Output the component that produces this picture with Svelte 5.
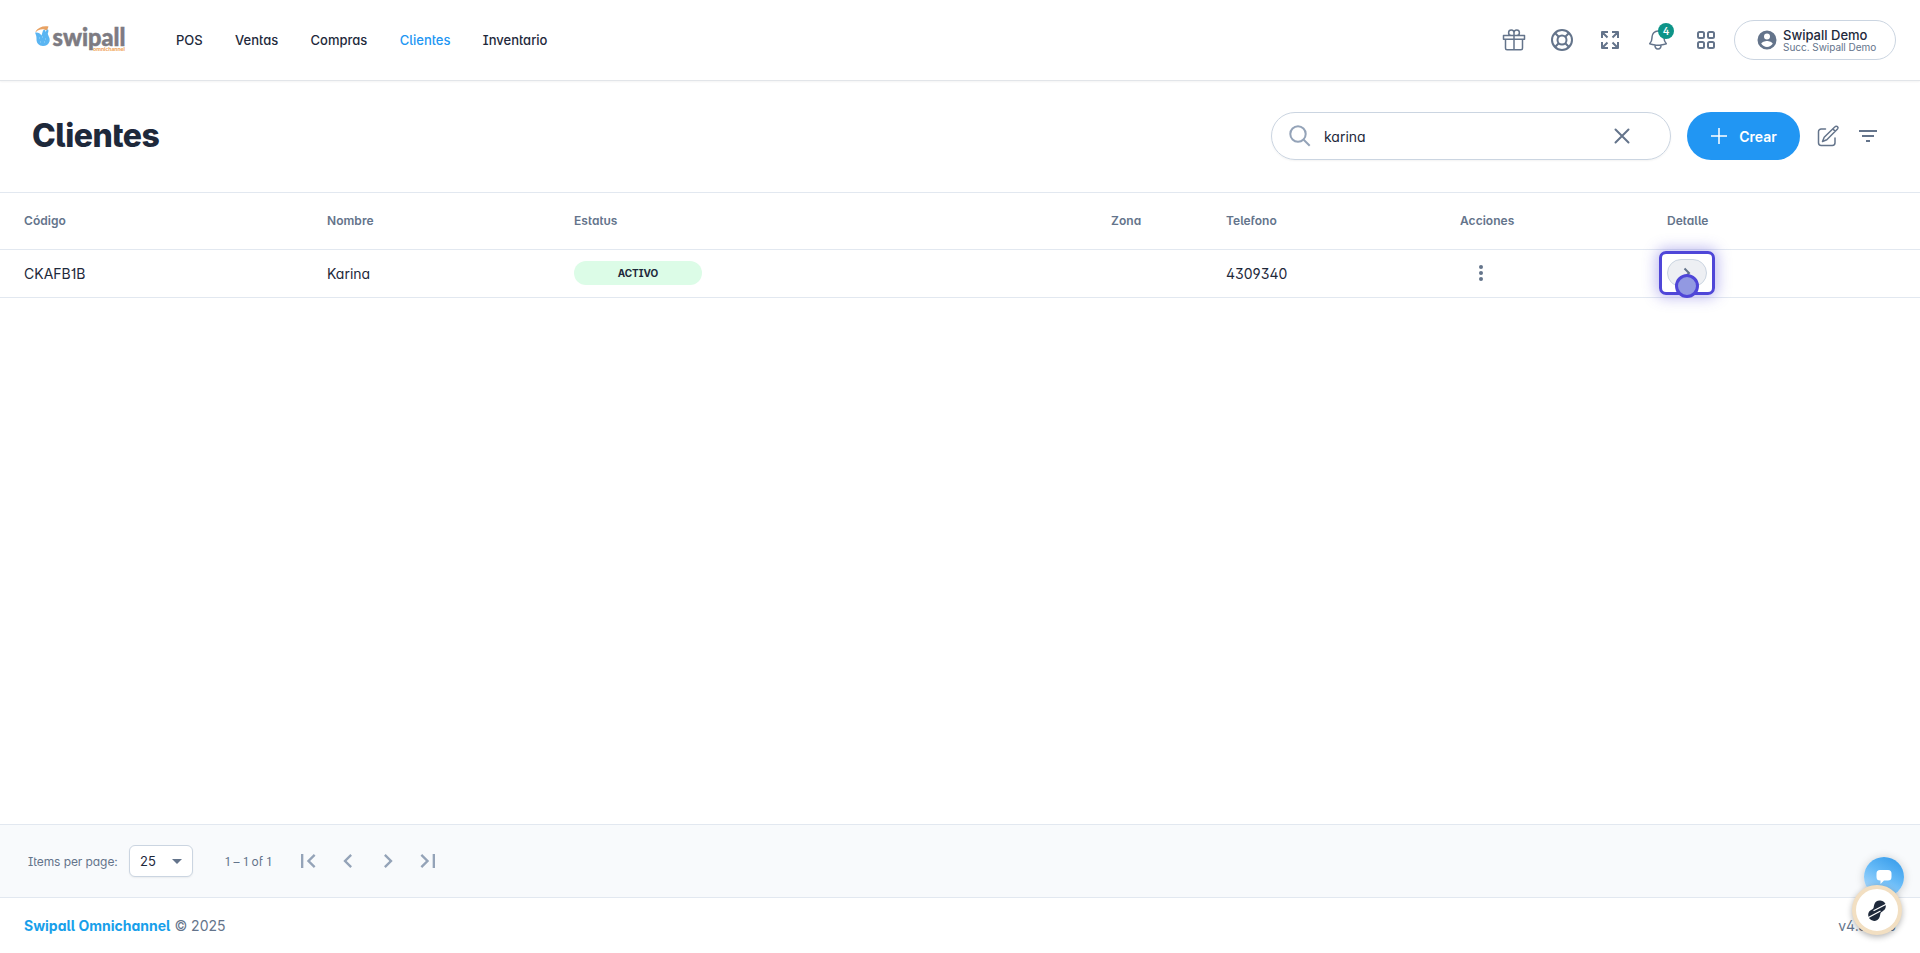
<script>
  let search = 'karina'

  const nav = ['POS', 'Ventas', 'Compras', 'Clientes', 'Inventario']
  const current = 'Clientes'

  const columns = ['Código', 'Nombre', 'Estatus', 'Zona', 'Telefono', 'Acciones', 'Detalle']

  const clients = [
    { code: 'CKAFB1B', name: 'Karina', status: 'ACTIVO', zone: '', phone: '4309340' }
  ]

  const pageButtons = [
    { label: 'First page', d: 'M18.41 16.59L13.82 12l4.59-4.59L17 6l-6 6 6 6zM6 6h2v12H6z' },
    { label: 'Previous page', d: 'M15.41 7.41L14 6l-6 6 6 6 1.41-1.41L10.83 12z' },
    { label: 'Next page', d: 'M10 6L8.59 7.41 13.17 12l-4.58 4.59L10 18l6-6z' },
    { label: 'Last page', d: 'M5.59 7.41L10.18 12l-4.59 4.59L7 18l6-6-6-6zM16 6h2v12h-2z' }
  ]
</script>

<div class="page">
  <header class="topbar">
    <svg class="logo" viewBox="0 -4 94 36" width="94" height="36">
      <path d="M1.500 7.500 C4 3.500 9 1.500 14.500 2.500 L13 6.500 L10 5.500 C7 5 4 6 2 8z" fill="#e8a263" />
      <path d="M1 8.500 C4 8 6 9 7.500 11.500 L9 6.500 C10.500 5 11.500 6 11.500 8 L13 5.500 C14.800 5 14.800 7 13.800 9.500 C14 12 16.500 14 15.500 17.500 C14.500 20.500 12 22 9 22 C5 22 2.300 19 2.500 15 C2.500 13 2.500 12 1 8.500z" fill="#5ab5f2" />
      <path d="M5 14h1M8 13h1M11 15h1M6 18h1M10 18h1" stroke="#9ad6f7" />
      <text class="brand" x="18.500" y="22" textLength="73" lengthAdjust="spacingAndGlyphs">swipall</text>
      <text class="tagline" x="59" y="27" textLength="32" lengthAdjust="spacingAndGlyphs">omnichannel</text>
    </svg>

    <nav>
      {#each nav as item}
        <a href="#top" class:active={item === current}>{item}</a>
      {/each}
    </nav>

    <div class="tools">
      <button class="tool" aria-label="Novedades">
        <svg viewBox="0 0 24 24" class="line"><path d="M12 7.500v14M1.500 7.500h21v3.700h-21zM3.500 11.200v9a1.500 1.500 0 0 0 1.500 1.500h14a1.500 1.500 0 0 0 1.500-1.500v-9M12 7.500H9.200A2.700 2.700 0 1 1 12 4.800zM12 7.500h2.800A2.700 2.700 0 1 0 12 4.800z" /></svg>
      </button>
      <button class="tool" aria-label="Ayuda">
        <svg viewBox="0 0 24 24" class="line thick"><circle cx="12" cy="12" r="10" /><circle cx="12" cy="12" r="4.500" /><path d="M5 5l3.700 3.700M19 5l-3.700 3.700M5 19l3.700-3.700M19 19l-3.700-3.700" /></svg>
      </button>
      <button class="tool" aria-label="Pantalla completa">
        <svg viewBox="0 0 24 24" class="line thick"><path d="M4 10V4h6M4 4l5.500 5.500M14 4h6v6M20 4l-5.500 5.500M4 14v6h6M4 20l5.500-5.500M20 14v6h-6M20 20l-5.500-5.500" /></svg>
      </button>
      <button class="tool" aria-label="Notificaciones">
        <svg viewBox="0 0 24 24" class="line"><path d="M14.860 17.080a24 24 0 0 0 5.450-1.300A9 9 0 0 1 18 9.750V9A6 6 0 0 0 6 9v.75a9 9 0 0 1-2.300 6.020c1.730.64 3.560 1.080 5.450 1.300m5.700 0a24 24 0 0 1-5.700 0m5.700 0a3 3 0 1 1-5.700 0" /></svg>
        <span class="count">4</span>
      </button>
      <button class="tool" aria-label="Accesos">
        <svg viewBox="0 0 24 24" class="line thick"><rect x="4" y="4" width="6" height="6" rx="1.500" /><rect x="14" y="4" width="6" height="6" rx="1.500" /><rect x="4" y="14" width="6" height="6" rx="1.500" /><rect x="14" y="14" width="6" height="6" rx="1.500" /></svg>
      </button>
      <button class="account">
        <svg viewBox="0 0 20 20" width="20" height="20"><path fill-rule="evenodd" clip-rule="evenodd" d="M10 .5a9.500 9.500 0 1 0 0 19 9.500 9.500 0 0 0 0-19zM10 3.400a3 3 0 1 1 0 6 3 3 0 0 1 0-6zM10 16.900a6.800 6.800 0 0 1-5.700-3.100c0-1.900 3.800-2.900 5.700-2.900s5.700 1 5.700 2.900a6.800 6.800 0 0 1-5.700 3.100z" /></svg>
        <span class="who">
          <span class="user">Swipall Demo</span>
          <span class="branch">Succ. Swipall Demo</span>
        </span>
      </button>
    </div>
  </header>

  <section class="heading">
    <h1>Clientes</h1>
    <div class="search">
      <svg viewBox="0 0 24 24" class="line lens"><circle cx="10" cy="10" r="7.700" /><path d="M15.700 15.700l6 6" /></svg>
      <input type="text" aria-label="Buscar" bind:value={search} />
      <svg viewBox="0 0 24 24" class="line clear"><path d="M5.500 5.500l13 13M18.500 5.500l-13 13" /></svg>
    </div>
    <button class="create">
      <svg viewBox="0 0 24 24" width="24" height="24"><path d="M12 4v16M4 12h16" /></svg>
      Crear
    </button>
    <button class="plain" aria-label="Editar">
      <svg viewBox="0 0 24 24" class="line"><path d="M9.500 5H5.200A2.700 2.700 0 0 0 2.500 7.700v11.100a2.700 2.700 0 0 0 2.700 2.700h11.100a2.700 2.700 0 0 0 2.700-2.700V14M19 2.700a1.700 1.700 0 0 1 2.500 2.400L10.800 15.800 6.500 17.500l1.700-4.300zM16.800 4.900l2.400 2.400" /></svg>
    </button>
    <button class="plain" aria-label="Filtrar">
      <svg viewBox="0 0 24 24" class="solid"><path d="M3 6h18v2H3zM6 11h12v2H6zM10 16h4v2h-4z" /></svg>
    </button>
  </section>

  <main>
    <div class="grid head">
      {#each columns as column}
        <div>{column}</div>
      {/each}
    </div>
    {#each clients as client}
      <div class="grid row">
        <div>{client.code}</div>
        <div>{client.name}</div>
        <div><span class="status">{client.status}</span></div>
        <div>{client.zone}</div>
        <div>{client.phone}</div>
        <div>
          <button class="more" aria-label="Acciones">
            <svg viewBox="0 0 24 24" class="solid"><circle cx="12" cy="6" r="2" /><circle cx="12" cy="12" r="2" /><circle cx="12" cy="18" r="2" /></svg>
          </button>
        </div>
        <div>
          <div class="detail">
            <button aria-label="Detalle">
              <svg viewBox="0 0 20 20" width="20" height="20"><path d="M7.500 5.500L12 10l-4.500 4.500" /></svg>
            </button>
            <span class="pointer"></span>
          </div>
        </div>
      </div>
    {/each}
  </main>

  <section class="paginator">
    <span class="per-page">Items per page:</span>
    <button class="select">25 <span class="caret"></span></button>
    <span class="range">1 – 1 of 1</span>
    {#each pageButtons as button}
      <button class="step" aria-label={button.label}>
        <svg viewBox="0 0 24 24" width="28" height="28"><path d={button.d} /></svg>
      </button>
    {/each}
  </section>

  <footer>
    <span><b>Swipall Omnichannel</b> © 2025</span>
    <span>v4.30.36</span>
  </footer>

  <!-- floating widgets -->
  <button class="chat" aria-label="Chat">
    <svg viewBox="0 0 16 14" width="16" height="14"><path d="M4 0h8a3.500 3.500 0 0 1 3.500 3.500v3.500a3.500 3.500 0 0 1-3.500 3.500H8L4.500 14v-3.500H4A3.500 3.500 0 0 1 .5 7V3.500A3.500 3.500 0 0 1 4 0z" /></svg>
  </button>
  <button class="guide" aria-label="Guía">
    <svg viewBox="0 0 18 21" width="18" height="21">
      <path d="M12 .5a5.500 5.500 0 0 1 5.800 5.500c0 3.500-2.600 4.800-4.600 6.200-1.200 1-.8 2.600-1.400 4.300A5.900 5.900 0 0 1 .2 14.800c0-3.300 2.500-4.600 4.500-5.800 1.300-1 .9-2.500 1.500-4.300A5.900 5.900 0 0 1 12 .5z" fill="#1e293b" />
      <path d="M0 17.800L12.500 11M5.500 10.800L18 4.300" stroke="#fff" stroke-width="1.200" />
    </svg>
  </button>
</div>

<style>
  :global(body) {
    margin: 0;
    background: #fff;
  }
  .page {
    position: relative;
    display: flex;
    flex-direction: column;
    height: 953px;
    overflow: hidden;
    color: #1e293b;
    font-family: Inter, 'Liberation Sans', sans-serif;
    font-size: 14px;
    font-feature-settings: 'salt', 'cv11', 'cv05', 'cv02', 'cv03', 'cv04', 'cv09';
  }
  .page * {
    box-sizing: border-box;
  }
  button {
    display: flex;
    align-items: center;
    justify-content: center;
    flex: none;
    margin: 0;
    padding: 0;
    border: 0;
    background: none;
    color: inherit;
    font: inherit;
    font-feature-settings: inherit;
  }
  svg {
    display: block;
    flex: none;
  }
  .line,
  .solid {
    width: 24px;
    height: 24px;
  }
  .line {
    fill: none;
    stroke: #64748b;
    stroke-width: 1.5;
    stroke-linejoin: round;
    stroke-linecap: round;
  }
  .thick {
    stroke-width: 2;
    stroke-linecap: butt;
  }
  .solid {
    fill: #64748b;
  }

  .topbar {
    display: flex;
    align-items: center;
    flex: none;
    height: 81px;
    padding: 0 24px 0 34px;
    border-bottom: 1px solid #e2e5e9;
    box-shadow: 0 1px 2px rgba(0, 0, 0, .05);
  }
  .logo {
    margin-top: -4px;
  }
  .brand {
    font: 900 24px Lato, sans-serif;
    fill: #7d7b82;
    stroke: #7d7b82;
    stroke-width: .5;
  }
  .tagline {
    font: 900 6px Lato, sans-serif;
    fill: #f0a45d;
  }
  nav {
    display: flex;
    gap: 32.4px;
    margin-left: 48px;
    padding-bottom: 1px;
  }
  nav a {
    color: #1e293b;
    font-size: 13px;
    font-weight: 500;
    line-height: 20px;
    text-decoration: none;
  }
  nav .active {
    color: #2196f3;
  }
  .tools {
    display: flex;
    align-items: center;
    gap: 8px;
    margin-left: auto;
  }
  .tool {
    position: relative;
    width: 40px;
    height: 40px;
  }
  .count {
    position: absolute;
    top: 3px;
    right: 4px;
    width: 16px;
    height: 16px;
    border-radius: 8px;
    background: #0d9488;
    color: #fff;
    font-size: 10px;
    font-weight: 600;
    line-height: 16px;
    text-align: center;
  }
  .account {
    justify-content: flex-start;
    width: 162px;
    height: 40px;
    padding-left: 22px;
    gap: 6px;
    border: 1px solid #cbd5e1;
    border-radius: 20px;
    fill: #64748b;
  }
  .who {
    display: flex;
    flex-direction: column;
    padding-top: 2px;
    text-align: left;
    white-space: nowrap;
    font-feature-settings: normal;
  }
  .user {
    font-size: 13px;
    font-weight: 500;
    line-height: 13px;
  }
  .branch {
    color: #64748b;
    font-size: 10px;
    line-height: 11px;
    letter-spacing: -.03px;
  }

  .heading {
    display: flex;
    align-items: center;
    flex: none;
    height: 112px;
    padding: 0 32px 1px;
    border-bottom: 1px solid #e2e8f0;
  }
  h1 {
    margin: 0 auto 0 0;
    font-size: 32px;
    font-weight: 800;
    letter-spacing: -.5px;
    line-height: 40px;
  }
  .search {
    display: flex;
    align-items: center;
    width: 400px;
    height: 48px;
    padding: 0 36px 0 16px;
    border: 1px solid #cbd5e1;
    border-radius: 24px;
    box-shadow: 0 1px 2px rgba(0, 0, 0, .05);
  }
  .search input {
    flex: 1;
    min-width: 0;
    margin-left: 12px;
    padding: 0;
    border: 0;
    outline: 0;
    background: none;
    color: #1e293b;
    font: inherit;
    font-feature-settings: inherit;
  }
  .lens {
    stroke: #94a3b8;
    stroke-width: 2;
    stroke-linecap: butt;
  }
  .clear {
    stroke-width: 2;
  }
  .create {
    width: 113px;
    height: 48px;
    margin: 0 8px 0 16px;
    padding-right: 3px;
    gap: 8px;
    border-radius: 24px;
    background: #2196f3;
    color: #fff;
    font-weight: 600;
    font-feature-settings: normal;
  }
  .create path {
    stroke: #fff;
    stroke-width: 1.5;
  }
  .plain {
    width: 40px;
    height: 40px;
  }

  main {
    flex: 1;
  }
  .grid {
    display: grid;
    grid-template-columns: 303px 247px 537px 115px 234px 207px 1fr;
    align-items: center;
    padding-left: 24px;
    border-bottom: 1px solid #e2e8f0;
  }
  .head {
    height: 57px;
    padding-bottom: 1px;
    color: #64748b;
    font-size: 12px;
    font-weight: 600;
    letter-spacing: .05px;
  }
  .row {
    height: 48px;
    padding-bottom: 1px;
  }
  .status {
    display: block;
    width: 128px;
    height: 24px;
    border-radius: 12px;
    background: #dcfce7;
    font-size: 10px;
    font-weight: 700;
    line-height: 24px;
    text-align: center;
  }
  .more {
    width: 41px;
    height: 40px;
  }
  .detail {
    position: relative;
    display: flex;
    align-items: center;
    justify-content: center;
    width: 56px;
    height: 44px;
    margin-left: -8px;
    border: 3px solid #4f46d8;
    border-radius: 7px;
    box-shadow: 0 0 14px 3px rgba(79, 70, 216, .35);
  }
  .detail button {
    width: 40px;
    height: 28px;
    border: 1px solid #cbd5e1;
    border-radius: 14px;
    background: #edeff3;
  }
  .detail path {
    fill: none;
    stroke: #64748b;
    stroke-width: 2;
  }
  .pointer {
    position: absolute;
    top: 20px;
    left: 13px;
    width: 24px;
    height: 24px;
    border: 3px solid #4f46d8;
    border-radius: 50%;
    background: #9299e2;
  }

  .paginator {
    display: flex;
    align-items: center;
    flex: none;
    height: 74px;
    padding-left: 28px;
    border-top: 1px solid #e2e8f0;
    border-bottom: 1px solid #e2e8f0;
    background: #f8fafc;
    color: #64748b;
    font-size: 12px;
  }
  .per-page {
    width: 101px;
    letter-spacing: -.08px;
  }
  .select {
    justify-content: space-between;
    width: 64px;
    height: 32px;
    padding: 0 10px;
    border: 1px solid #cbd5e1;
    border-radius: 6px;
    background: #fff;
    box-shadow: 0 1px 2px rgba(0, 0, 0, .06);
    color: #1e293b;
    font-size: 13px;
  }
  .caret {
    border: 5px solid transparent;
    border-top-color: #64748b;
    border-bottom: 0;
  }
  .range {
    width: 63px;
    margin-left: 32px;
    letter-spacing: .15px;
  }
  .step {
    width: 40px;
    height: 40px;
    fill: #94a3b8;
  }

  footer {
    display: flex;
    align-items: center;
    justify-content: space-between;
    flex: none;
    height: 55px;
    padding: 0 24px;
    color: #64748b;
  }
  b {
    color: #189fea;
    font-weight: 700;
  }

  .chat,
  .guide {
    position: absolute;
    border-radius: 50%;
  }
  .chat {
    right: 16px;
    bottom: 56px;
    width: 40px;
    height: 40px;
    background: linear-gradient(30deg, #a5d6fb 15%, #64b9f7 55%, #2f97e8);
    box-shadow: 0 1px 10px rgba(0, 0, 0, .2);
    fill: #fff;
  }
  .guide {
    right: 18px;
    bottom: 18px;
    width: 50px;
    height: 50px;
    padding-right: 1px;
    border: 4px solid #f2dfc2;
    background: #fff;
    box-shadow: 0 2px 6px rgba(0, 0, 0, .3);
  }
</style>
